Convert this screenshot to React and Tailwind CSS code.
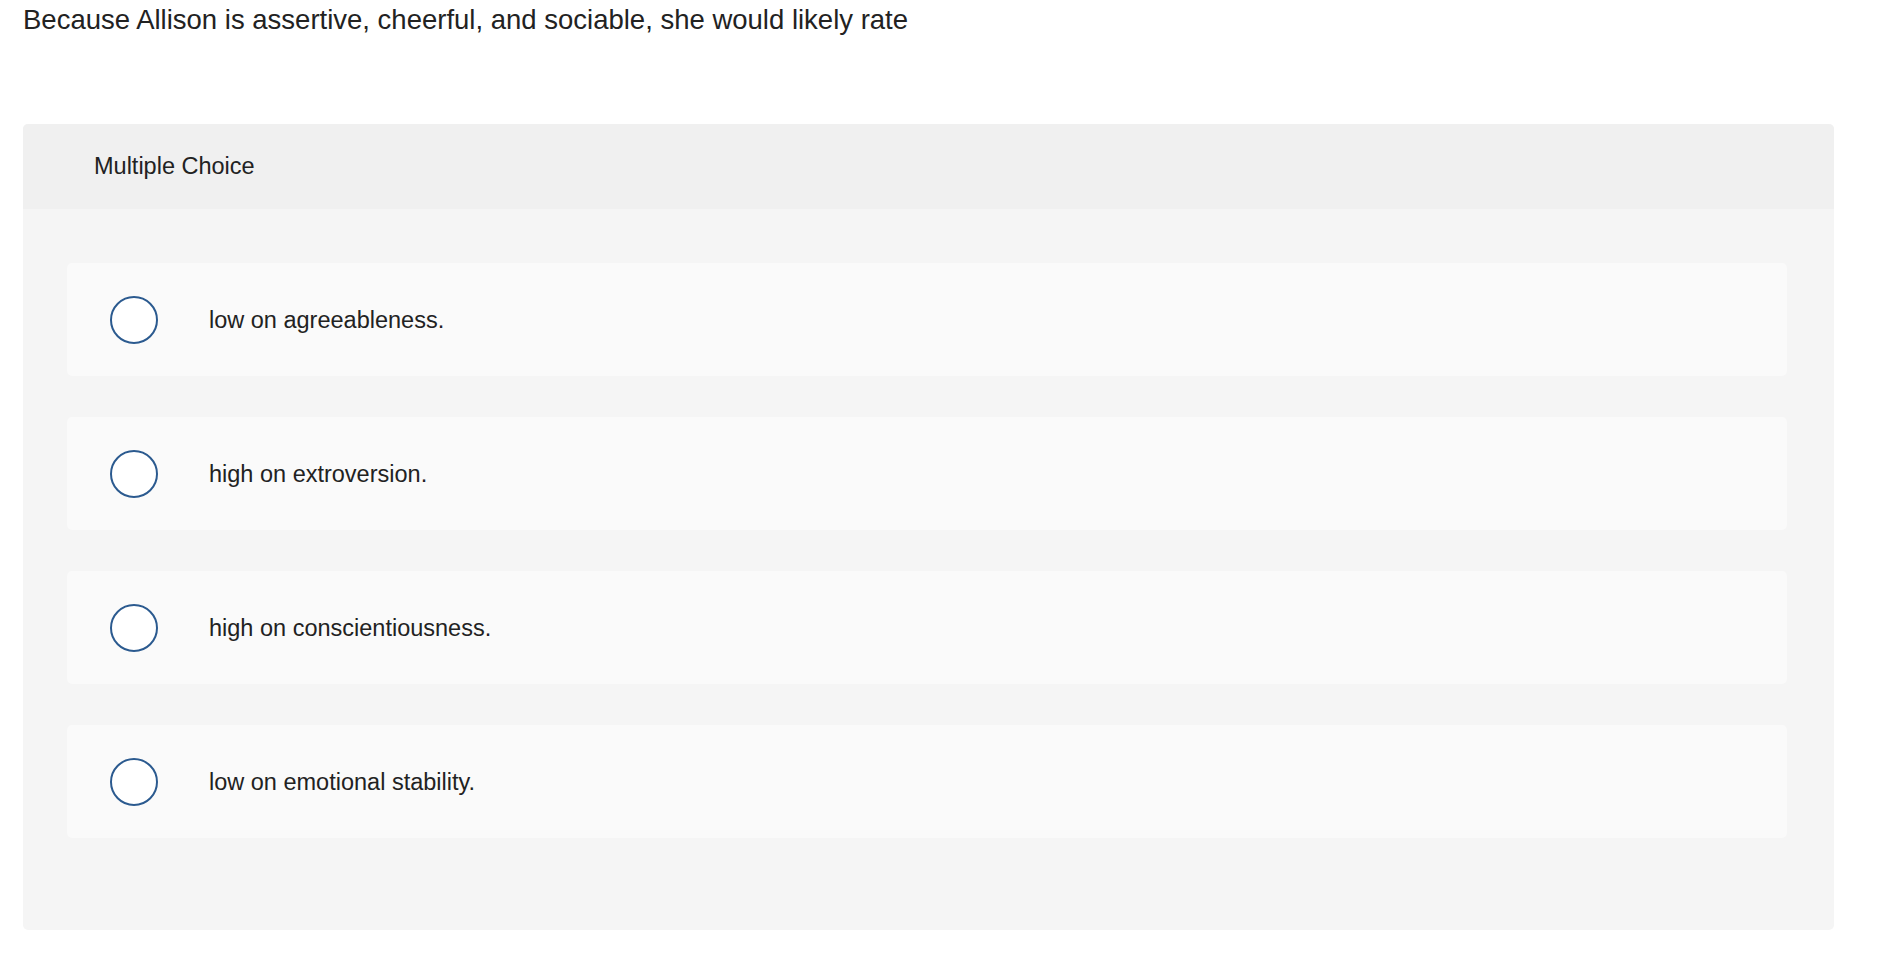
const options = [
  'low on agreeableness.',
  'high on extroversion.',
  'high on conscientiousness.',
  'low on emotional stability.',
];

const Option = ({ label }) => (
  <div className="h-[113px] rounded-[5px] bg-[#fafafa] flex items-center pl-[43px]">
    <div className="w-[48px] h-[48px] rounded-full border-2 border-[#2b5a8f] bg-white shrink-0"></div>
    <span className="ml-[51px] pt-[2px] text-[23.5px] text-[#222222]">{label}</span>
  </div>
);

export default function App() {
  return (
    <div className="min-h-screen bg-white px-[23px] pr-[46px] font-['Liberation_Sans',Arial,sans-serif]">
      <p className="text-[27.5px] leading-[40px] text-[#222222]">
        Because Allison is assertive, cheerful, and sociable, she would likely rate
      </p>

      {/* Question panel */}
      <div className="mt-[84px] rounded-[5px] overflow-hidden bg-[#f5f5f5]">
        <div className="h-[85px] bg-[#f0f0f0] flex items-center pl-[71px]">
          <span className="pt-[1px] text-[23.5px] text-[#222222]">Multiple Choice</span>
        </div>
        <div className="pt-[54px] pb-[92px] pl-[44px] pr-[47px] flex flex-col gap-[41px]">
          {options.map(o => (
            <Option key={o} label={o} />
          ))}
        </div>
      </div>
    </div>
  );
}
